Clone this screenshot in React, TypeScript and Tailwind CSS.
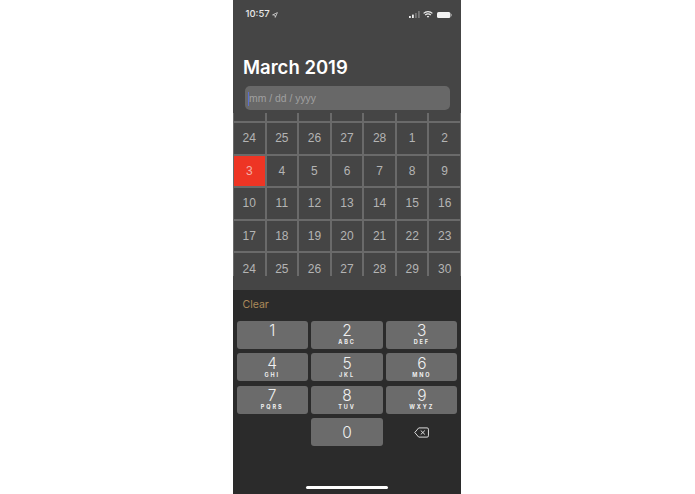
import React from 'react';

const rows = [
  [24, 25, 26, 27, 28, 1, 2],
  [3, 4, 5, 6, 7, 8, 9],
  [10, 11, 12, 13, 14, 15, 16],
  [17, 18, 19, 20, 21, 22, 23],
  [24, 25, 26, 27, 28, 29, 30],
];

const keys = [
  ['1', ''],
  ['2', 'ABC'],
  ['3', 'DEF'],
  ['4', 'GHI'],
  ['5', 'JKL'],
  ['6', 'MNO'],
  ['7', 'PQRS'],
  ['8', 'TUV'],
  ['9', 'WXYZ'],
];

const StatusBar = () => (
  <div className="h-[28px] flex items-center justify-between pl-[12.5px] pr-[9.5px] pt-[1px] text-[#e8e8e8] shrink-0">
    <div className="flex items-center gap-[2px] font-['Inter',sans-serif] text-[9.5px] font-medium">
      <span>10:57</span>
      <svg width="6" height="6" viewBox="0 0 10 10" fill="none" stroke="#d8d8d8" strokeWidth="1.3">
        <path d="M9 1 L1 4.8 L5 5.2 L5.4 9 Z" />
      </svg>
    </div>
    <div className="flex items-center gap-[3.5px]">
      <svg width="11" height="7" viewBox="0 0 11 7">
        <rect x="0" y="5" width="1.8" height="2" fill="#eee" />
        <rect x="3" y="3.6" width="1.8" height="3.4" fill="#eee" />
        <rect x="6" y="2" width="1.8" height="5" fill="#777" />
        <rect x="9" y="0" width="1.8" height="7" fill="#777" />
      </svg>
      <svg width="10" height="7" viewBox="0 0 10 7" fill="none" stroke="#eee" strokeWidth="1.2">
        <path d="M0.6 2.4 C3 0 7 0 9.4 2.4" />
        <path d="M2.2 4 C3.8 2.6 6.2 2.6 7.8 4" />
        <path d="M5 6.8 L3.8 5.4 C4.5 4.9 5.5 4.9 6.2 5.4 Z" fill="#eee" stroke="none" />
      </svg>
      <svg width="15" height="6" viewBox="0 0 15 6">
        <rect x="0" y="0" width="13.4" height="6" rx="1.6" fill="#f2f2f2" />
        <rect x="13.9" y="1.8" width="1" height="2.4" rx="0.5" fill="#999" />
      </svg>
    </div>
  </div>
);

const Calendar = () => (
  <div className="mt-[3px] h-[163px] shrink-0 overflow-hidden bg-[#6a6a6a] px-[1px] grid grid-cols-7 gap-[2px] content-start font-['Liberation_Sans',sans-serif] text-[12px] text-[#b4b4b4]">
    {rows[0].map((_, i) => (
      <div key={i} className="h-[8px] bg-[#454545]" />
    ))}
    {rows.flatMap((row, r) =>
      row.map((d, i) => {
        const today = r === 1 && i === 0;
        return (
          <div
            key={`${r}-${i}`}
            className={`h-[30.6px] flex items-center justify-center ${today ? 'bg-[#ee3524] text-[#f3b0a8]' : 'bg-[#454545]'}`}
          >
            {d}
          </div>
        );
      }),
    )}
  </div>
);

const Key = ({ n, sub }: { n: string; sub: string }) => (
  <div className="h-[28px] rounded-[3px] bg-[#6b6b6b] flex flex-col items-center text-[#f0f0f0] font-['Inter',sans-serif]">
    <div className="text-[15.5px] font-light leading-[13px] mt-[3.5px]">{n}</div>
    {sub && <div className="text-[5.5px] font-bold leading-[7px] tracking-[1.9px] mt-[2px]">{sub}</div>}
  </div>
);

const Keypad = () => (
  <div className="flex-1 bg-[#2b2b2b] flex flex-col relative">
    <div className="h-[30.5px] pl-[9.5px] flex items-center font-['Inter',sans-serif] text-[10.5px] text-[#ab8a5a] shrink-0">
      Clear
    </div>
    <div className="grid grid-cols-3 gap-x-[3.6px] gap-y-[4.6px] px-[3.6px]">
      {keys.map(([n, sub]) => (
        <Key key={n} n={n} sub={sub} />
      ))}
      <div />
      <div className="h-[28px] rounded-[3px] bg-[#6b6b6b] flex items-center justify-center text-[15.5px] font-light text-[#f0f0f0] font-['Inter',sans-serif]">
        0
      </div>
      <div className="flex items-center justify-center">
        <svg width="15" height="11" viewBox="0 0 16 11" fill="none" stroke="#e6e6e6" strokeWidth="1">
          <path d="M5 0.6 H14 a1.4 1.4 0 0 1 1.4 1.4 V9 a1.4 1.4 0 0 1 -1.4 1.4 H5 L0.8 5.5 Z" strokeLinejoin="round" />
          <path d="M7.2 3.4 L11.6 7.6 M11.6 3.4 L7.2 7.6" />
        </svg>
      </div>
    </div>
    <div className="absolute bottom-[5px] left-[73px] w-[82px] h-[3px] rounded-full bg-white" />
  </div>
);

export default function App() {
  return (
    <div className="w-[695px] h-[494px] bg-white flex overflow-hidden pl-[233px] antialiased">
      <div className="w-[228px] h-[494px] bg-[#454545] flex flex-col">
        <StatusBar />
        <div className="mt-[27px] h-[26px] pl-[10px] flex items-center font-['Inter',sans-serif] text-[18.5px] font-semibold text-white shrink-0">
          March 2019
        </div>
        <div className="mt-[5px] mx-[11.5px] h-[24px] rounded-[5px] bg-[#686868] flex items-center pl-[3px] pt-[1px] shrink-0 font-['Liberation_Sans',sans-serif] text-[10.4px] text-[#a0a0a0]">
          <span className="w-[1.5px] h-[14px] bg-[#5b6fd0]" />
          mm / dd / yyyy
        </div>
        <Calendar />
        <div className="h-[14px] shrink-0" />
        <Keypad />
      </div>
    </div>
  );
}
